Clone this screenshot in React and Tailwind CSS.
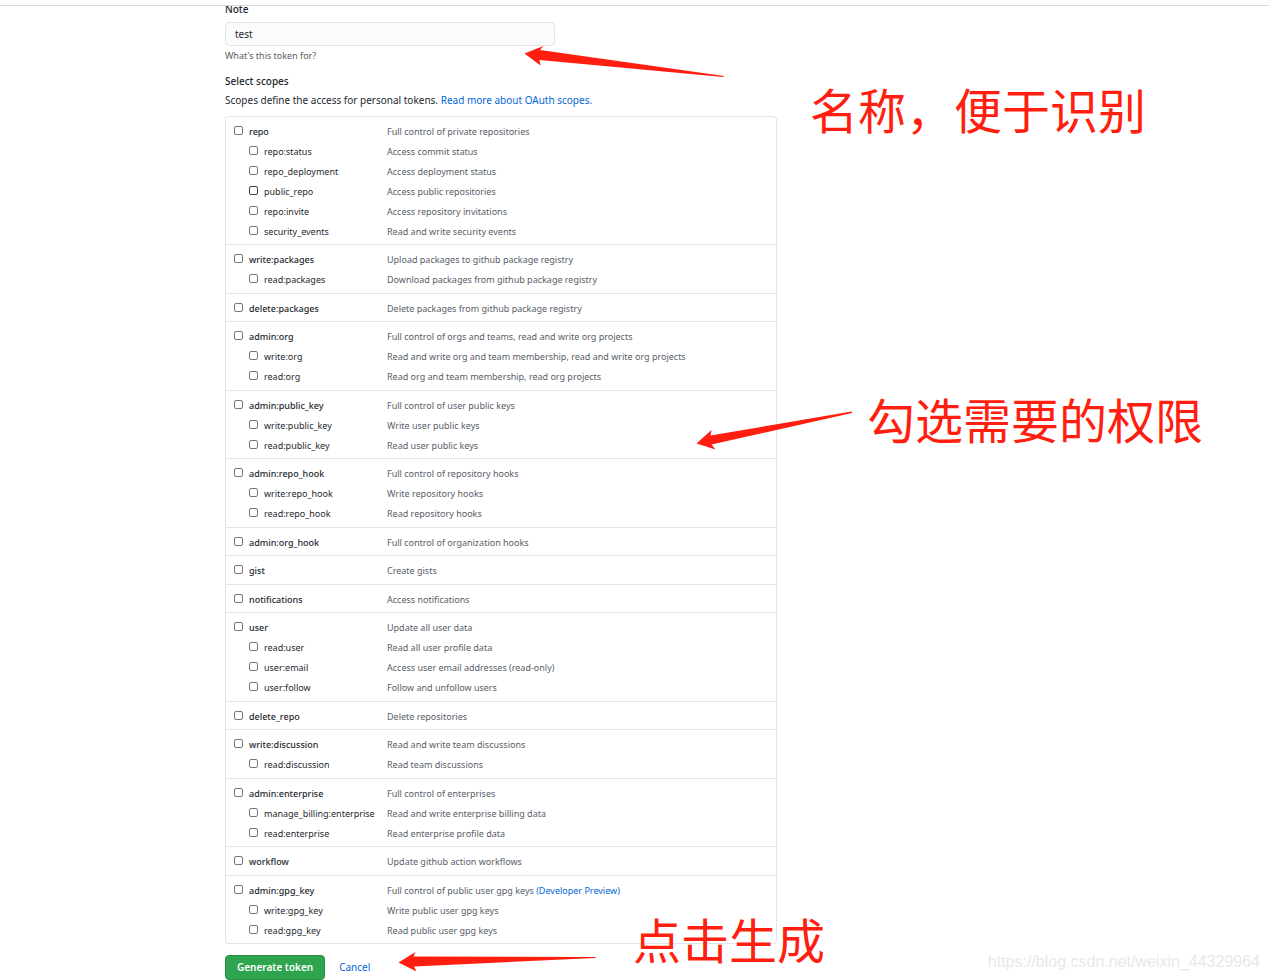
import { useState } from "react";

const SCOPES = [
  { name: "repo", desc: "Full control of private repositories", children: [
    { name: "repo:status", desc: "Access commit status" },
    { name: "repo_deployment", desc: "Access deployment status" },
    { name: "public_repo", desc: "Access public repositories", active: true },
    { name: "repo:invite", desc: "Access repository invitations" },
    { name: "security_events", desc: "Read and write security events" },
  ] },
  { name: "write:packages", desc: "Upload packages to github package registry", children: [
    { name: "read:packages", desc: "Download packages from github package registry" },
  ] },
  { name: "delete:packages", desc: "Delete packages from github package registry" },
  { name: "admin:org", desc: "Full control of orgs and teams, read and write org projects", children: [
    { name: "write:org", desc: "Read and write org and team membership, read and write org projects" },
    { name: "read:org", desc: "Read org and team membership, read org projects" },
  ] },
  { name: "admin:public_key", desc: "Full control of user public keys", children: [
    { name: "write:public_key", desc: "Write user public keys" },
    { name: "read:public_key", desc: "Read user public keys" },
  ] },
  { name: "admin:repo_hook", desc: "Full control of repository hooks", children: [
    { name: "write:repo_hook", desc: "Write repository hooks" },
    { name: "read:repo_hook", desc: "Read repository hooks" },
  ] },
  { name: "admin:org_hook", desc: "Full control of organization hooks" },
  { name: "gist", desc: "Create gists" },
  { name: "notifications", desc: "Access notifications" },
  { name: "user", desc: "Update all user data", children: [
    { name: "read:user", desc: "Read all user profile data" },
    { name: "user:email", desc: "Access user email addresses (read-only)" },
    { name: "user:follow", desc: "Follow and unfollow users" },
  ] },
  { name: "delete_repo", desc: "Delete repositories" },
  { name: "write:discussion", desc: "Read and write team discussions", children: [
    { name: "read:discussion", desc: "Read team discussions" },
  ] },
  { name: "admin:enterprise", desc: "Full control of enterprises", children: [
    { name: "manage_billing:enterprise", desc: "Read and write enterprise billing data" },
    { name: "read:enterprise", desc: "Read enterprise profile data" },
  ] },
  { name: "workflow", desc: "Update github action workflows" },
  { name: "admin:gpg_key", desc: "Full control of public user gpg keys", link: "(Developer Preview)", children: [
    { name: "write:gpg_key", desc: "Write public user gpg keys" },
    { name: "read:gpg_key", desc: "Read public user gpg keys" },
  ] },
];

function ScopeRow({ scope, nested, checked, onToggle }) {
  return (
    <div className="flex h-5 items-center text-[9px] leading-5">
      <label className={`flex w-[161px] shrink-0 items-center whitespace-nowrap text-[#24292e] ${nested ? "pl-[23px]" : "pl-2 font-medium"}`}>
        <input
          type="checkbox"
          checked={checked}
          onChange={() => onToggle(scope.name)}
          className={`mr-1.5 mb-1 size-[9px] shrink-0 appearance-none rounded-[2px] border bg-white checked:bg-[#0366d6] ${scope.active ? "border-[#3c3c3c]" : "border-[#767676]"}`}
        />
        {scope.name}
      </label>
      <span className="whitespace-nowrap text-[#586069]">
        {scope.desc}
        {scope.link && <> <a href="#preview" className="text-[#0366d6]">{scope.link}</a></>}
      </span>
    </div>
  );
}

function Callout({ className, children }) {
  return (
    <p className={`pointer-events-none absolute whitespace-nowrap font-['Noto_Sans_CJK_SC',sans-serif] text-5xl leading-[56px] text-[#ff1e10] ${className}`}>
      {children}
    </p>
  );
}

export default function App() {
  const [note, setNote] = useState("test");
  const [selected, setSelected] = useState([]);

  const toggle = (name) =>
    setSelected((prev) => prev.includes(name) ? prev.filter((n) => n !== name) : [...prev, name]);

  return (
    <div className="relative min-h-screen overflow-hidden bg-white font-['Noto_Sans','Open_Sans',sans-serif] text-[#24292e]">
      {/* Bottom edge of the page header */}
      <header className="relative z-10 h-1.5 border-b border-[#d8dade] bg-white" />

      <form onSubmit={(e) => e.preventDefault()} className="-mt-1 ml-[225px] max-w-[552px]">
        <label htmlFor="note" className="block text-[10px] leading-[14px] font-medium">Note</label>
        <input
          id="note"
          value={note}
          onChange={(e) => setNote(e.target.value)}
          className="mt-1.5 block h-6 w-[330px] max-w-full rounded border border-[#e1e4e8] bg-[#fafbfc] px-[9px] text-[10px]"
        />
        <p className="mt-0.5 text-[9px] leading-4 text-[#586069]">What's this token for?</p>

        <h2 className="mt-[9px] text-[10px] leading-4 font-medium">Select scopes</h2>
        <p className="mt-0.5 mb-[7px] text-[10px] leading-[18px]">
          Scopes define the access for personal tokens. <a href="#scopes" className="text-[#0366d6]">Read more about OAuth scopes.</a>
        </p>

        {/* Scope list */}
        <ul className="rounded border border-t-0 border-[#e1e4e8]">
          {SCOPES.map((s) => (
            <li key={s.name} className="border-t border-[#e1e4e8] pt-[5px] pb-0.5 first:rounded-t even:pb-[3px]">
              <ScopeRow scope={s} checked={selected.includes(s.name)} onToggle={toggle} />
              {s.children?.map((c) => (
                <ScopeRow key={c.name} scope={c} nested checked={selected.includes(c.name)} onToggle={toggle} />
              ))}
            </li>
          ))}
        </ul>

        <div className="mt-[11px] flex items-center gap-3.5">
          <button type="submit" className="h-[25px] rounded border border-[#2a8f47] bg-[#2ea44f] px-[11px] text-[10px] font-semibold text-white">Generate token</button>
          <a href="#cancel" className="text-[10px] text-[#0366d6]">Cancel</a>
        </div>
      </form>

      {/* Callouts over the form */}
      <svg className="pointer-events-none absolute top-0 left-0 h-[980px] w-[1269px]" viewBox="0 0 1269 980" fill="#ff1e10" aria-hidden="true">
        <path d="M524.5 53.5 543.5 46 540 50 724 76 723 77 539.500 60 540.500 65.500Z" />
        <path d="M696.500 443.500 711.500 430 710.500 435.500 851.500 411.500 852 413 711.500 444.500 715.500 449.500Z" />
        <path d="M398.500 962.500 415.500 952 413.500 956.500 595.500 957 595.500 958 414 966.500 416.500 971.500Z" />
      </svg>
      <Callout className="top-20 left-[810px]">名称，便于识别</Callout>
      <Callout className="top-[390px] left-[867px]">勾选需要的权限</Callout>
      <Callout className="top-[910px] left-[633px]">点击生成</Callout>

      <p className="pointer-events-none absolute right-[9px] bottom-1.5 font-['Liberation_Sans',sans-serif] text-base leading-6 text-[#e8e8e8]">
        https://blog.csdn.net/weixin_44329964
      </p>
    </div>
  );
}
